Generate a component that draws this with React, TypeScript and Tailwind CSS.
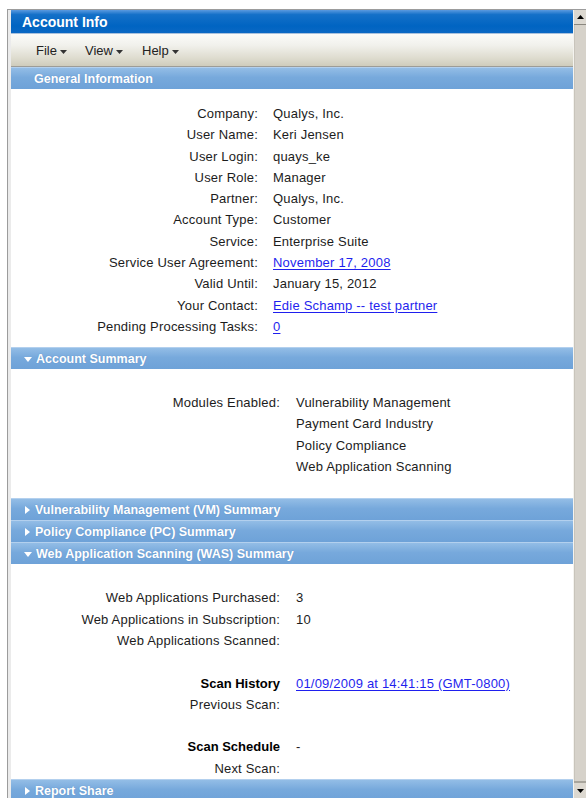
import React from "react";

const font = { fontFamily: '"Liberation Sans", Arial, sans-serif' };

function Caret() {
  return (
    <svg width="7" height="4" viewBox="0 0 7 4" className="ml-[3px] mt-[2px]">
      <path d="M0 0H7L3.5 4Z" fill="#333" />
    </svg>
  );
}

function SectionBar({ title, open }: { title: string; open?: boolean | null }) {
  return (
    <div className="flex h-[22px] shrink-0 items-center border-t border-[#b3d0ee] bg-[linear-gradient(to_bottom,#93bde6,#77a9dc_45%,#6ea2d8)] pl-[13px] pt-[1px] text-[12.5px] font-bold text-white [text-shadow:0_0_1px_rgba(40,80,140,0.35)]">
      {open === true && (
        <svg width="8" height="5" viewBox="0 0 8 5" className="mr-[4px]">
          <path d="M0 0H8L4 5Z" fill="#fff" />
        </svg>
      )}
      {open === false && (
        <svg width="5" height="8" viewBox="0 0 5 8" className="mr-[5px] ml-[1px]">
          <path d="M0 0V8L5 4Z" fill="#fff" />
        </svg>
      )}
      {open === null && <span className="w-[10px]" />}
      <span>{title}</span>
    </div>
  );
}

type Row = { label: string; value?: string; link?: boolean; bold?: boolean };

function Rows({ rows, labelWidth, gap }: { rows: Row[]; labelWidth: number; gap: number }) {
  return (
    <div className="flex flex-col">
      {rows.map((r, i) => (
        <div
          key={i}
          className="flex h-[21.3px] items-center pt-[2px] text-[13px] tracking-[0.2px] text-[#1c1c1c]"
        >
          <div
            className={`shrink-0 text-right ${r.bold ? "font-bold tracking-normal text-black" : ""}`}
            style={{ width: labelWidth }}
          >
            {r.label}
          </div>
          <div style={{ width: gap }} className="shrink-0" />
          <div className={r.link ? "text-[#1f1fee] underline underline-offset-2" : ""}>{r.value}</div>
        </div>
      ))}
    </div>
  );
}

function Scrollbar() {
  return (
    <div className="flex w-[13px] shrink-0 flex-col border-l border-[#f4f3ef] bg-[#d6d2ca]">
      <div className="flex h-[15px] items-center justify-center border-b border-[#8a877f] bg-[#dcd8d0]">
        <svg width="7" height="4" viewBox="0 0 7 4">
          <path d="M0 4H7L3.5 0Z" fill="#000" />
        </svg>
      </div>
      <div className="flex-1 border-l border-[#c8c4bb]" />
      <div className="flex h-[17px] items-center justify-center border-t-2 border-[#a8a59c] bg-[#dcd8d0]">
        <svg width="7" height="4" viewBox="0 0 7 4">
          <path d="M0 0H7L3.5 4Z" fill="#000" />
        </svg>
      </div>
    </div>
  );
}

export default function App() {
  const general: Row[] = [
    { label: "Company:", value: "Qualys, Inc." },
    { label: "User Name:", value: "Keri Jensen" },
    { label: "User Login:", value: "quays_ke" },
    { label: "User Role:", value: "Manager" },
    { label: "Partner:", value: "Qualys, Inc." },
    { label: "Account Type:", value: "Customer" },
    { label: "Service:", value: "Enterprise Suite" },
    { label: "Service User Agreement:", value: "November 17, 2008", link: true },
    { label: "Valid Until:", value: "January 15, 2012" },
    { label: "Your Contact:", value: "Edie Schamp -- test partner", link: true },
    { label: "Pending Processing Tasks:", value: "0", link: true },
  ];
  const modules: Row[] = [
    { label: "Modules Enabled:", value: "Vulnerability Management" },
    { label: "", value: "Payment Card Industry" },
    { label: "", value: "Policy Compliance" },
    { label: "", value: "Web Application Scanning" },
  ];
  const was: Row[] = [
    { label: "Web Applications Purchased:", value: "3" },
    { label: "Web Applications in Subscription:", value: "10" },
    { label: "Web Applications Scanned:", value: "" },
    { label: "", value: "" },
    { label: "Scan History", value: "01/09/2009 at 14:41:15 (GMT-0800)", link: true, bold: true },
    { label: "Previous Scan:", value: "" },
    { label: "", value: "" },
    { label: "Scan Schedule", value: "-", bold: true },
    { label: "Next Scan:", value: "" },
  ];

  return (
    <div style={font} className="h-[798px] w-[586px] overflow-hidden bg-white pl-[7px] pt-[9px]">
      <div className="flex h-full border-l border-t border-[#9c9c9c] bg-[#ebebeb] pl-[3px]">
        <div className="flex min-w-0 flex-1 flex-col bg-white">
          {/* window title */}
          <div className="flex h-[23px] shrink-0 items-center bg-[linear-gradient(to_bottom,#5a9ae0,#1470c8_20%,#0064c2_70%,#0a68c4)] pl-[11px] pt-[2px] text-[14px] font-bold text-white">
            Account Info
          </div>
          <div className="h-px shrink-0 bg-[#a9c1dc]" />
          {/* menu bar */}
          <div className="flex h-[33px] shrink-0 items-center border-b border-[#9c9c98] bg-[linear-gradient(to_bottom,#fbfbf9,#f1f1ec_35%,#dedccf_75%,#cfccbc)] pl-[25px] pt-[2px] text-[13px] text-[#222]">
            <div className="flex w-[49px] items-center">File<Caret /></div>
            <div className="flex w-[57px] items-center">View<Caret /></div>
            <div className="flex items-center">Help<Caret /></div>
          </div>

          <SectionBar title="General Information" open={null} />
          <div className="shrink-0 pb-[11px] pt-[13px]">
            <Rows rows={general} labelWidth={247} gap={15} />
          </div>

          <SectionBar title="Account Summary" open={true} />
          <div className="shrink-0 pb-[22px] pt-[22px]">
            <Rows rows={modules} labelWidth={269} gap={16} />
          </div>

          <SectionBar title="Vulnerability Management (VM) Summary" open={false} />
          <SectionBar title="Policy Compliance (PC) Summary" open={false} />
          <SectionBar title="Web Application Scanning (WAS) Summary" open={true} />
          <div className="shrink-0 pb-[1px] pt-[22px]">
            <Rows rows={was} labelWidth={269} gap={16} />
          </div>

          <SectionBar title="Report Share" open={false} />
          <div className="flex-1" />
        </div>
        <Scrollbar />
      </div>
    </div>
  );
}
